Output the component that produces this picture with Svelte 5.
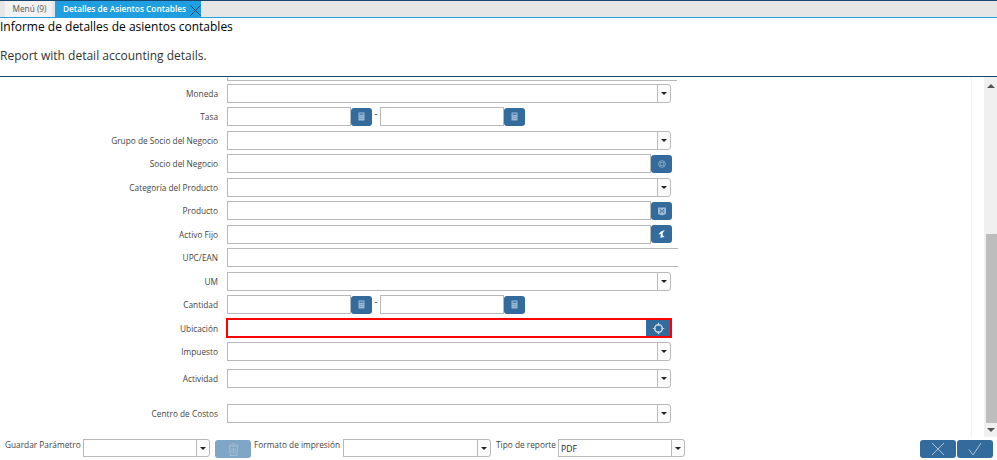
<script>
  const rows = [
    { label: 'Moneda', type: 'combo' },
    { label: 'Tasa', type: 'range' },
    { label: 'Grupo de Socio del Negocio', type: 'combo' },
    { label: 'Socio del Negocio', type: 'search', icon: 'partner' },
    { label: 'Categoría del Producto', type: 'combo' },
    { label: 'Producto', type: 'search', icon: 'product' },
    { label: 'Activo Fijo', type: 'search', icon: 'asset' },
    { label: 'UPC/EAN', type: 'text' },
    { label: 'UM', type: 'combo' },
    { label: 'Cantidad', type: 'range' },
    { label: 'Ubicación', type: 'location' },
    { label: 'Impuesto', type: 'combo' },
    { label: 'Actividad', type: 'combo', cls: 'activity' },
    { label: 'Centro de Costos', type: 'combo', cls: 'costs' }
  ]
</script>

{#snippet arrow()}
  <span class="arrow"><i></i></span>
{/snippet}

{#snippet calc()}
  <button class="btn small">
    <svg width="7" height="9" viewBox="0 0 7 9">
      <rect x="0.5" y="0.5" width="6" height="8" fill="#9db9d3" />
      <rect x="1.5" y="1.5" width="4" height="1.5" fill="#4f80ab" />
      <rect x="1.5" y="4.2" width="4" height="0.7" fill="#6d97bb" />
      <rect x="1.5" y="6" width="4" height="0.7" fill="#6d97bb" />
    </svg>
  </button>
{/snippet}

<div class="tabs">
  <div class="tab">Menú (9)</div>
  <div class="tab active">
    Detalles de Asientos Contables
    <svg class="close" width="11" height="11" viewBox="0 0 11 11">
      <path d="M0.5 0.5 L10.5 10.5 M10.5 0.5 L0.5 10.5" stroke="#16466f" stroke-width="1" fill="none" />
    </svg>
  </div>
</div>

<header>
  <h1>Informe de detalles de asientos contables</h1>
  <p>Report with detail accounting details.</p>
</header>

<main>
  <div class="scroll-area">
    <div class="cut"></div>
    {#each rows as row}
      <div class="row {row.cls ?? ''}">
        <label>{row.label}</label>
        {#if row.type === 'combo'}
          <div class="combo wide"><div class="box"></div>{@render arrow()}</div>
        {:else if row.type === 'range'}
          <div class="box num"></div>
          {@render calc()}
          <span class="dash">-</span>
          <div class="box num"></div>
          {@render calc()}
        {:else if row.type === 'search'}
          <div class="box search"></div>
          <button class="btn">
            {#if row.icon === 'partner'}
              <svg width="8" height="8" viewBox="0 0 8 8">
                <circle cx="4" cy="4" r="3.3" fill="none" stroke="#8fb0cd" stroke-width="0.9" />
                <rect x="2.7" y="2.3" width="2.6" height="3.4" fill="none" stroke="#8fb0cd" stroke-width="0.7" />
              </svg>
            {:else if row.icon === 'product'}
              <svg width="10" height="10" viewBox="0 0 10 10">
                <path d="M1 1.5 H9 V8 L5 9.5 L1 8 Z" fill="#9db9d3" />
                <path d="M3 3 L4.5 5 L3 7 M7 3 L5.5 5 L7 7" stroke="#3a6f9f" stroke-width="1" fill="none" />
              </svg>
            {:else}
              <svg width="10" height="10" viewBox="0 0 10 10">
                <path d="M8 1 C5 1.6 2.6 3.2 1.5 5.6 L4 5.2 L3.2 8.8 L7.6 8 C6.6 7.4 5.8 6.6 5.6 5.6 C5.4 4.4 6.4 2.6 8 1 Z" fill="#f2f6fa" />
              </svg>
            {/if}
          </button>
        {:else if row.type === 'text'}
          <div class="box upc"></div>
        {:else}
          <div class="location">
            <button class="btn loc">
              <svg width="13" height="13" viewBox="0 0 13 13">
                <circle cx="6.5" cy="6.5" r="3.8" fill="none" stroke="#c4d6e6" stroke-width="1.5" />
                <path d="M6.5 0.8 V3.6 M6.5 9.4 V12.2 M0.8 6.5 H3.6 M9.4 6.5 H12.2" stroke="#c4d6e6" stroke-width="1.2" />
              </svg>
            </button>
          </div>
        {/if}
      </div>
    {/each}
  </div>
  <div class="scrollbar">
    <span class="up"></span>
    <div class="track"><div class="thumb"></div></div>
    <span class="down"></span>
  </div>
</main>

<footer>
  <span class="f-label first">Guardar Parámetro</span>
  <div class="combo save"><div class="box"></div>{@render arrow()}</div>
  <button class="btn trash">
    <svg width="11" height="13" viewBox="0 0 11 13">
      <path d="M1.5 3 H9.5 L8.8 12.5 H2.2 Z" fill="none" stroke="#a3bdd4" stroke-width="1" />
      <path d="M0.5 2 H10.5 M4 0.8 H7 M4 5 V10.5 M5.5 5 V10.5 M7 5 V10.5" stroke="#a3bdd4" stroke-width="0.8" fill="none" />
    </svg>
  </button>
  <span class="f-label format">Formato de impresión</span>
  <div class="combo fmt"><div class="box"></div>{@render arrow()}</div>
  <span class="f-label type">Tipo de reporte</span>
  <div class="combo kind"><div class="box pdf">PDF</div>{@render arrow()}</div>
  <div class="actions">
    <button class="btn action">
      <svg width="14" height="14" viewBox="0 0 14 14">
        <path d="M1 1 L13 13 M13 1 L1 13" stroke="#a9c3da" stroke-width="1" fill="none" />
      </svg>
    </button>
    <button class="btn action">
      <svg width="14" height="14" viewBox="0 0 14 14">
        <path d="M1 7.5 L5 13 L13 1" stroke="#a9c3da" stroke-width="1" fill="none" />
      </svg>
    </button>
  </div>
</footer>

<style>
  :global(body) {
    margin: 0;
    background: #fff;
    font-family: 'Open Sans', sans-serif;
    color: #333;
    overflow: hidden;
  }

  .tabs {
    height: 16px;
    display: flex;
    padding-left: 5px;
    gap: 3px;
    background: #e6e6e6;
    border-top: 1px solid #17466e;
    border-bottom: 1px solid #1f9fe0;
    font-size: 8.3px;
    line-height: 16px;
  }
  .tab {
    width: 47px;
    padding-left: 2px;
    box-sizing: border-box;
    text-align: center;
    background: #f2f2f2;
    color: #555;
  }
  .tab.active {
    width: 146px;
    background: #1f9fe0;
    color: #fff;
    font-weight: 600;
    text-align: left;
    padding-left: 8px;
    position: relative;
  }
  .close {
    position: absolute;
    right: 0;
    top: 4px;
  }

  header {
    height: 58px;
    border-bottom: 1px solid #17466e;
  }
  h1 {
    margin: 0;
    font-size: 12px;
    font-weight: 400;
    line-height: 17px;
    color: #000;
  }
  header p {
    margin: 12px 0 0;
    font-size: 12px;
    line-height: 17px;
    color: #333;
  }

  main {
    display: flex;
    height: 360px;
  }
  .scroll-area {
    flex: 1;
    border-right: 1px solid #f4f4f4;
    margin-right: 12px;
    overflow: hidden;
  }
  .cut {
    width: 450px;
    margin-left: 227px;
    height: 4px;
    border-bottom: 1px solid #b9b9b9;
    box-sizing: border-box;
    border-left: 1px solid #b9b9b9;
  }

  .row {
    display: flex;
    align-items: center;
    height: 19px;
    margin-top: 4.5px;
    font-size: 8.3px;
    color: #444;
  }
  .row:nth-child(2) {
    margin-top: 2.8px;
  }
  .row.activity {
    margin-top: 8px;
  }
  .row.costs {
    margin-top: 16px;
  }
  label {
    width: 218px;
    margin-right: 9px;
    text-align: right;
    flex: none;
  }

  .box {
    height: 19px;
    box-sizing: border-box;
    border: 1px solid #b9b9b9;
    background: #fff;
  }
  .combo {
    display: flex;
    height: 19px;
    flex: none;
  }
  .combo .box {
    flex: 1;
    min-width: 0;
    border-right: none;
  }
  .combo.wide {
    width: 444px;
  }
  .arrow {
    width: 12px;
    height: 17px;
    flex: none;
    box-sizing: content-box;
    border: 1px solid #b9b9b9;
    border-radius: 0 3px 3px 0;
    margin-left: -1px;
    display: flex;
    align-items: center;
    justify-content: center;
    background: #fbfbfb;
  }
  .arrow i {
    width: 0;
    height: 0;
    border-left: 3px solid transparent;
    border-right: 3px solid transparent;
    border-top: 3px solid #222;
  }

  .num {
    width: 124px;
    flex: none;
  }
  .dash {
    width: 8px;
    margin-top: -6px;
    text-align: center;
    font-size: 9px;
    color: #222;
  }
  .search {
    width: 424px;
    flex: none;
  }
  .upc {
    width: 451px;
    border-right: none;
    flex: none;
  }

  .btn {
    padding: 0;
    border: none;
    width: 21px;
    height: 18px;
    background: #336b9d;
    border-radius: 3px;
    display: flex;
    align-items: center;
    justify-content: center;
    flex: none;
  }
  .btn.small {
    width: 21px;
  }

  .location {
    width: 446px;
    height: 20px;
    margin-left: -1px;
    box-sizing: border-box;
    border: 2px solid #f00;
    display: flex;
    justify-content: flex-end;
  }
  .btn.loc {
    height: 16px;
    width: 24px;
    border-radius: 0;
  }

  .scrollbar {
    width: 13px;
    flex: none;
    background: #f0f0f0;
    display: flex;
    flex-direction: column;
    align-items: center;
  }
  .up, .down {
    width: 0;
    height: 0;
    border-left: 4px solid transparent;
    border-right: 4px solid transparent;
    flex: none;
  }
  .up {
    margin: 7px 0 6px;
    border-bottom: 4px solid #555;
  }
  .down {
    margin: 5px 0 5px;
    border-top: 4px solid #555;
  }
  .track {
    flex: 1;
    width: 100%;
    display: flex;
    flex-direction: column;
    justify-content: flex-end;
    padding-left: 2px;
    box-sizing: border-box;
  }
  .thumb {
    height: 189px;
    background: #bdbdbd;
  }

  footer {
    display: flex;
    align-items: flex-start;
    padding-top: 2px;
    font-size: 8.3px;
    color: #444;
  }
  .f-label {
    line-height: 11px;
    white-space: nowrap;
  }
  .f-label.first {
    margin-left: 5px;
    width: 78px;
  }
  .f-label.format {
    margin-left: 3px;
    width: 89px;
  }
  .f-label.type {
    margin-left: 5px;
    width: 62px;
  }
  footer .combo {
    height: 18px;
  }
  footer .box {
    height: 18px;
  }
  footer .arrow {
    height: 16px;
  }
  .combo.save {
    width: 127px;
  }
  .combo.fmt {
    width: 148px;
  }
  .combo.kind {
    width: 127px;
  }
  .pdf {
    font-size: 8.6px;
    line-height: 19px;
    padding-left: 2px;
    color: #222;
  }
  .btn.trash {
    width: 36px;
    height: 18px;
    margin: 1px 0 0 5px;
    background: #7fa6c6;
  }
  .actions {
    display: flex;
    gap: 1px;
    margin: 1px 0 0 235px;
  }
  .btn.action {
    width: 36px;
    height: 18px;
  }
</style>
